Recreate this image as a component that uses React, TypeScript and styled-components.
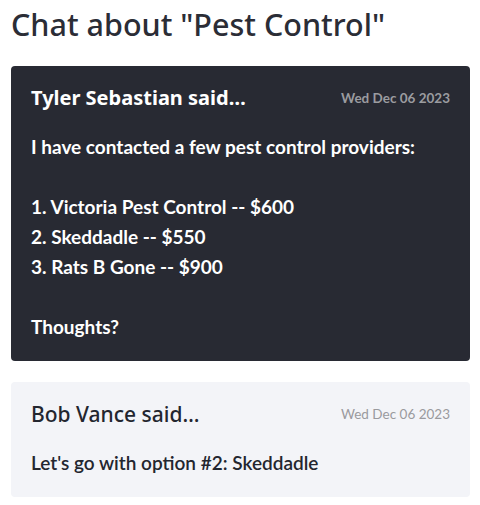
import React from "react";
import styled, { createGlobalStyle } from "styled-components";

const Global = createGlobalStyle`
  html, body { margin: 0; padding: 0; background: #ffffff; }
  body { font-family: "Lato", "Noto Sans", sans-serif; }
`;

const Page = styled.main`
  padding: 0 10px 0 11px;
`;

const Title = styled.h1`
  margin: 0;
  padding-top: 4px;
  height: 66px;
  box-sizing: border-box;
  font-family: "Noto Sans", sans-serif;
  font-weight: 500;
  font-size: 30.5px;
  line-height: 40px;
  color: #2b2d36;
`;

const Thread = styled.div`
  display: flex;
  flex-direction: column;
  gap: 21px;
`;

const Card = styled.article<{ $dark?: boolean }>`
  background: ${(p) => (p.$dark ? "#282a33" : "#f3f4f8")};
  color: ${(p) => (p.$dark ? "#ffffff" : "#23262f")};
  border-radius: 4px;
  padding: 20px 20px 19px 20px;
  display: flex;
  flex-direction: column;
  gap: 22px;
`;

const Header = styled.header`
  display: flex;
  justify-content: space-between;
  align-items: center;
  height: 24px;
`;

const Author = styled.span<{ $dark?: boolean }>`
  font-family: "Noto Sans", sans-serif;
  font-size: ${(p) => (p.$dark ? "20px" : "21px")};
  font-weight: ${(p) => (p.$dark ? 700 : 500)};
  line-height: 24px;
`;

const DateLabel = styled.span<{ $dark?: boolean }>`
  font-family: "Lato", sans-serif;
  font-size: 13.5px;
  font-weight: ${(p) => (p.$dark ? 700 : 400)};
  color: ${(p) => (p.$dark ? "#9b9ca0" : "#9a9a9e")};
`;

const Body = styled.p<{ $dark?: boolean }>`
  margin: 0;
  white-space: pre-wrap;
  font-family: "Lato", sans-serif;
  font-size: 19px;
  font-weight: ${(p) => (p.$dark ? 700 : 600)};
  line-height: 30px;
`;

const messages = [
  {
    author: "Tyler Sebastian",
    date: "Wed Dec 06 2023",
    dark: true,
    text:
      "I have contacted a few pest control providers:\n\n1. Victoria Pest Control -- $600\n2. Skeddadle -- $550\n3. Rats B Gone -- $900\n\nThoughts?",
  },
  {
    author: "Bob Vance",
    date: "Wed Dec 06 2023",
    dark: false,
    text: "Let's go with option #2: Skeddadle",
  },
];

export default function App() {
  return (
    <>
      <Global />
      <Page>
        <Title>Chat about "Pest Control"</Title>
        <Thread>
          {messages.map((m, i) => (
            <Card key={i} $dark={m.dark}>
              <Header>
                <Author $dark={m.dark}>{m.author} said…</Author>
                <DateLabel $dark={m.dark}>{m.date}</DateLabel>
              </Header>
              <Body $dark={m.dark}>{m.text}</Body>
            </Card>
          ))}
        </Thread>
      </Page>
    </>
  );
}
